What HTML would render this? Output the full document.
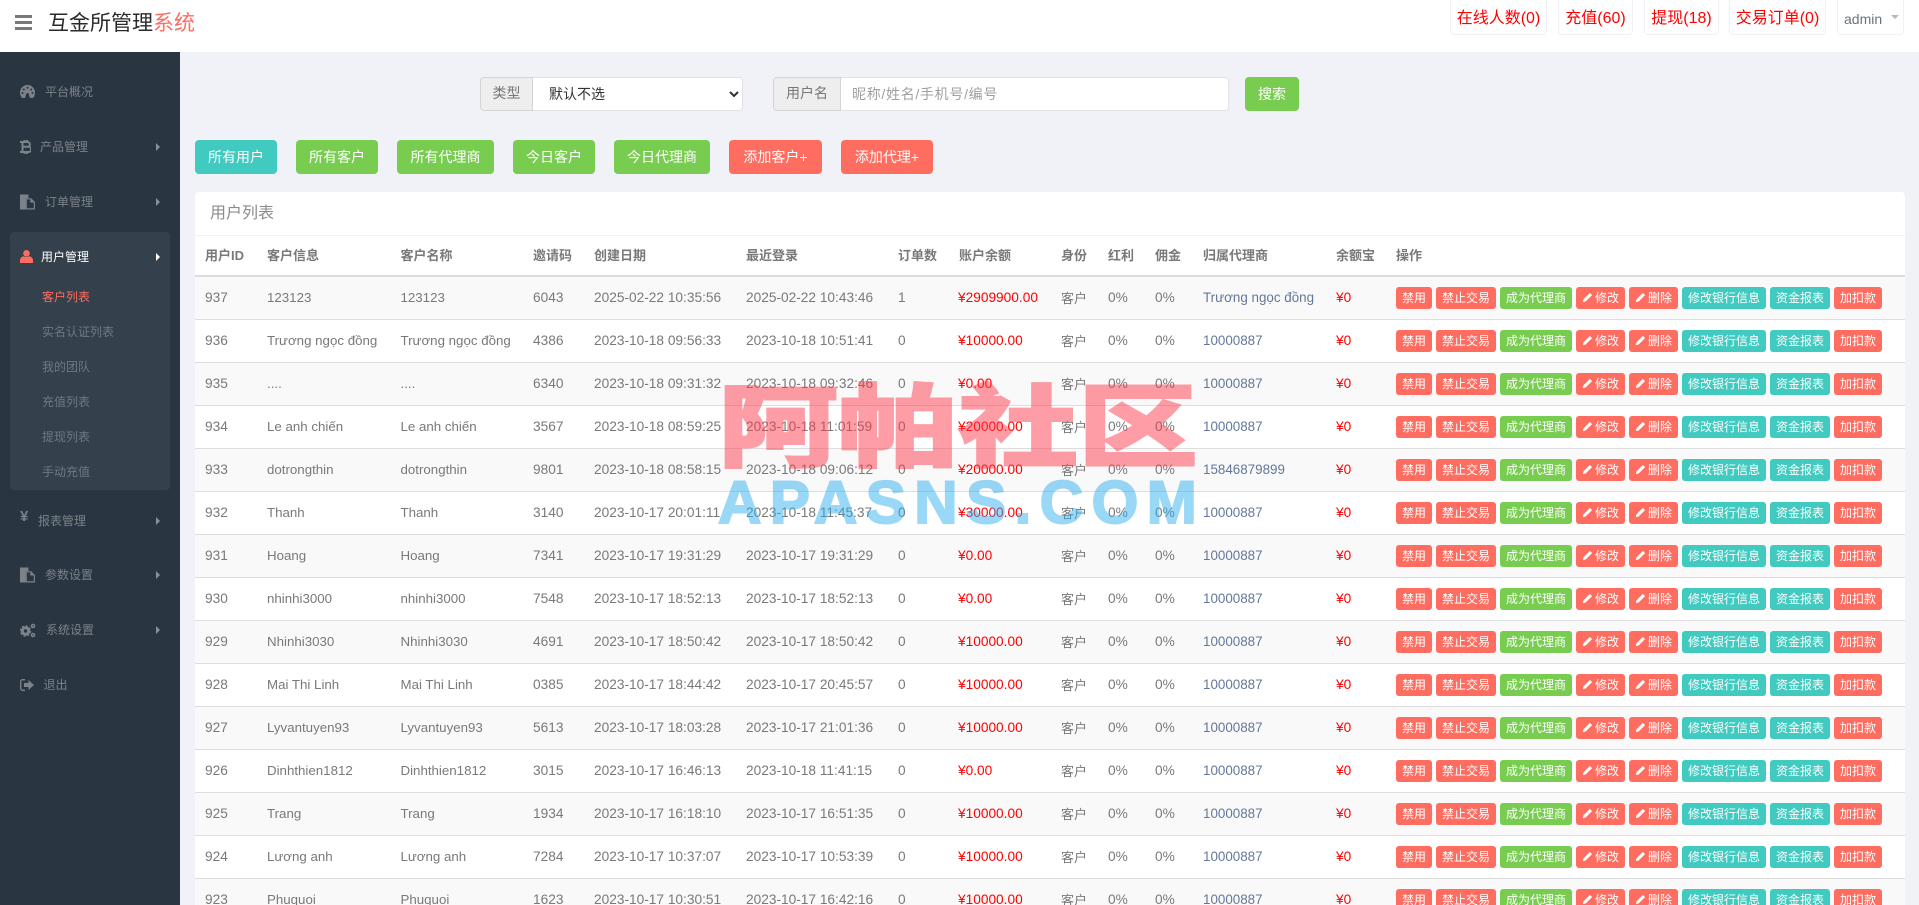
<!DOCTYPE html>
<html lang="zh-CN"><head><meta charset="utf-8"><title>互金所管理系统</title>
<style>
*{box-sizing:border-box}
html,body{margin:0;padding:0;width:1919px;height:905px;overflow:hidden;background:#f1f2f7;font-family:"Liberation Sans","Noto Sans CJK SC",sans-serif;color:#797979;font-size:13px}
.abs,.nb,.si,.sub,.ic,.ar,.tb,.hb{position:absolute}
#head{position:absolute;left:0;top:0;width:1919px;height:52px;background:#fff}
.hb{left:15px;width:17px;height:3px;background:#797979}
#logo{position:absolute;left:48px;top:10px;font-size:21px;line-height:27px;color:#2a2a2a}
#logo span{color:#ff6c60}
.nb{top:-4px;height:39px;border:1px solid #f0f1f6;border-radius:4px;background:#fff;color:#f00;font-size:16px;line-height:44px;text-align:center;white-space:nowrap}
#side{position:absolute;left:0;top:52px;width:180px;height:853px;background:#2a3542}
#subbox{position:absolute;left:10px;top:180px;width:160px;height:258px;background:#35404d;border-radius:4px}
.si{font-size:12px;line-height:16px;color:#7b8288;white-space:nowrap}
.sub{left:42px;font-size:12px;line-height:16px;color:#707880;white-space:nowrap}
.ic{left:20px;display:block}
.ar{left:156px;width:0;height:0;border-left:4px solid #8b9096;border-top:4px solid transparent;border-bottom:4px solid transparent}
.grp{position:absolute;top:77px;height:34px;display:flex}
.add{height:34px;background:#eee;border:1px solid #d4d4d6;border-radius:4px 0 0 4px;color:#777;font-size:14px;line-height:30px;text-align:center}
select,input{height:34px;border:1px solid #e2e2e4;border-left:0;border-radius:0 4px 4px 0;background:#fff;font-size:14px;font-family:inherit;margin:0;outline:0}
select{width:210px;padding-left:12px;color:#333}
input{width:388px;padding-left:11px;color:#333;letter-spacing:.7px}
input::placeholder{color:#a0a0a0;opacity:1}
.tb{top:140px;height:34px;border-radius:4px;color:#fff;font-size:14px;line-height:34px;text-align:center;white-space:nowrap}
.t{background:#41cac0}.g{background:#78cd51}.r{background:#ff6c60}
#panel{position:absolute;left:195px;top:192px;width:1710px;height:713px;overflow:hidden;background:#fff;border-radius:4px 4px 0 0}
#ptitle{position:absolute;left:15px;top:11px;font-size:16px;line-height:22px;color:#8b8b8b}
#pline{position:absolute;left:0;top:43px;width:1710px;height:1px;background:#eff2f7}
table{position:absolute;left:0;top:44px;width:1710px;border-collapse:separate;border-spacing:0;table-layout:fixed}
th{height:41px;border-bottom:2px solid #ddd;padding:0 0 2px 10px;text-align:left;font-size:13px;font-weight:700;color:#797979;white-space:nowrap}
td{height:43px;border-bottom:1px solid #ddd;padding:0 0 2px 10px;font-size:13.7px;color:#797979;white-space:nowrap;overflow:hidden;background:#fff}
tbody tr:nth-child(odd) td{background:#f9f9f9}
td:nth-child(2),td:nth-child(3){font-size:13.3px}
td.c,td.k{font-size:13px}
td.m{color:#f00}
td.m:nth-child(8){padding-left:9px}
td.l{color:#63789a;font-size:13.4px}
td:last-child{padding-bottom:1px}
.ops{display:flex;gap:4px;height:22px}
.ops b{display:block;height:22px;border-radius:3px;color:#fff;font-size:12px;font-weight:400;line-height:22px;text-align:center;white-space:nowrap}
.ops svg{width:11px;height:11px;vertical-align:-1px;margin-right:2px}
.w1{width:36px}.w2{width:60px}.w3{width:72px}.w4{width:49px}.w6{width:84px}.w7{width:48px}
#wm1{position:absolute;left:718px;top:360px;height:120px;font-size:120px;line-height:120px;font-weight:900;color:#ff3546;opacity:.48;white-space:nowrap;transform:scaleY(.75);-webkit-text-stroke:2.5px #ff3546;font-family:"Noto Sans CJK SC",sans-serif}
#wm2{position:absolute;left:718px;top:471px;font-size:60px;line-height:64px;font-weight:700;color:#2baeee;opacity:.48;white-space:nowrap;letter-spacing:8.5px;-webkit-text-stroke:2px #2baeee;font-family:"Liberation Sans",sans-serif}
</style></head><body>
<svg width="0" height="0" style="position:absolute"><symbol id="pen" viewBox="0 0 12 12"><path fill="#fff" d="M8.6 1 11 3.4 4 10.4 .9 11.1 1.6 8Z"/></symbol>
<symbol id="files" viewBox="0 0 16 16"><path fill="#7b8288" d="M0 0h9v4H6v12H0z"/><path fill="none" stroke="#7b8288" stroke-width="1.3" d="M6.6 4.6h5l3.7 3.7v7H6.6z"/><path fill="#7b8288" d="M11 4.5v4h4z"/></symbol></svg>

<div id="head">
<div class="hb" style="top:15px"></div><div class="hb" style="top:21px"></div><div class="hb" style="top:27px"></div>
<div id="logo">互金所管理<span>系统</span></div>
<div class="nb" style="left:1450px;width:97px">在线人数(0)</div>
<div class="nb" style="left:1558px;width:75px">充值(60)</div>
<div class="nb" style="left:1644px;width:75px">提现(18)</div>
<div class="nb" style="left:1729px;width:97px">交易订单(0)</div>
<div class="nb" style="left:1837px;width:67px;color:#6a737b;font-size:14px;text-align:left;padding-left:6px">admin<i style="position:absolute;left:53px;top:18px;width:0;height:0;border-top:4px solid #b6b8c0;border-left:4px solid transparent;border-right:4px solid transparent"></i></div>
</div>

<div id="side">
<div id="subbox"></div>
<svg class="ic" style="top:33px" width="15" height="13" viewBox="0 0 15 13"><path fill="#7b8288" d="M7.5 0A7.5 7.5 0 0 0 0 7.5c0 2 .7 3.9 2 5.5h3l1.500-4.600a1.500 1.500 0 0 1 2 0L10 13h3c1.300-1.600 2-3.500 2-5.500A7.500 7.500 0 0 0 7.500 0Z"/><g fill="#2a3542"><circle cx="7.500" cy="2.800" r="1"/><circle cx="3.800" cy="4.500" r="1"/><circle cx="11.200" cy="4.500" r="1"/><circle cx="2.500" cy="8" r="1"/><circle cx="12.500" cy="8" r="1"/></g></svg>
<div class="si" style="left:45px;top:32px">平台概况</div>
<svg class="ic" style="top:88px" width="11" height="14" viewBox="0 0 11 14"><path fill="none" stroke="#7b8288" stroke-width="2" d="M2.500 2h5a2.400 2.400 0 0 1 0 4.800h-5m0 0h6a2.500 2.500 0 0 1 0 5.200h-6zM2.500 2v10M0 2h3M0 12h3M4.500 0v2M7 0v2M4.500 12v2M7 12v2"/></svg>
<div class="si" style="left:40px;top:87px">产品管理</div><i class="ar" style="top:91px"></i>
<svg class="ic" style="top:142px" width="15" height="16"><use href="#files"/></svg>
<div class="si" style="left:45px;top:142px">订单管理</div><i class="ar" style="top:146px"></i>
<svg class="ic" style="top:198px" width="13" height="13" viewBox="0 0 13 13"><circle cx="6.500" cy="3.300" r="3.300" fill="#ff6c60"/><path fill="#ff6c60" d="M0 13v-2.500C0 8 2 6.500 4 6.300c1.500 1 3.500 1 5 0 2 .2 4 1.700 4 4.200V13z"/></svg>
<div class="si" style="left:41px;top:197px;color:#fff">用户管理</div><i class="ar" style="top:201px;border-left-color:#fff"></i>
<div class="sub" style="top:237px;color:#ff6c60">客户列表</div>
<div class="sub" style="top:272px">实名认证列表</div>
<div class="sub" style="top:307px">我的团队</div>
<div class="sub" style="top:342px">充值列表</div>
<div class="sub" style="top:377px">提现列表</div>
<div class="sub" style="top:412px">手动充值</div>
<div class="si" style="left:20px;top:457px;font-size:15px;font-weight:700">¥</div>
<div class="si" style="left:38px;top:461px">报表管理</div><i class="ar" style="top:465px"></i>
<svg class="ic" style="top:515px" width="15" height="16"><use href="#files"/></svg>
<div class="si" style="left:45px;top:515px">参数设置</div><i class="ar" style="top:519px"></i>
<svg class="ic" style="top:571px" width="16" height="15" viewBox="0 0 16 15"><g fill="none" stroke="#7b8288"><circle cx="5.500" cy="8" r="3.200" stroke-width="3"/><circle cx="5.500" cy="8" r="5" stroke-width="1.400" stroke-dasharray="2 1.930"/><circle cx="13" cy="3" r="1.500" stroke-width="1.600"/><circle cx="13" cy="12" r="1.500" stroke-width="1.600"/></g></svg>
<div class="si" style="left:46px;top:570px">系统设置</div><i class="ar" style="top:574px"></i>
<svg class="ic" style="top:627px" width="14" height="12" viewBox="0 0 14 12"><path fill="none" stroke="#7b8288" stroke-width="1.300" d="M5 .7H2.500A1.800 1.800 0 0 0 .7 2.500v7a1.800 1.800 0 0 0 1.800 1.800H5"/><path fill="#7b8288" d="M4 4h4.500V1L14 6l-5.500 5V8H4z"/></svg>
<div class="si" style="left:43.500px;top:625px">退出</div>
</div>

<div class="grp" style="left:480px"><div class="add" style="width:53px">类型</div><select><option>默认不选</option></select></div>
<div class="grp" style="left:773px"><div class="add" style="width:68px">用户名</div><input placeholder="昵称/姓名/手机号/编号"></div>
<div class="tb g" style="left:1245px;top:77px;width:54px">搜索</div>

<div class="tb t" style="left:195px;width:82px">所有用户</div>
<div class="tb g" style="left:296px;width:82px">所有客户</div>
<div class="tb g" style="left:397px;width:97px">所有代理商</div>
<div class="tb g" style="left:513px;width:82px">今日客户</div>
<div class="tb g" style="left:614px;width:96px">今日代理商</div>
<div class="tb r" style="left:729px;width:93px">添加客户+</div>
<div class="tb r" style="left:841px;width:92px">添加代理+</div>

<div id="panel">
<div id="ptitle">用户列表</div><div id="pline"></div>
<table>
<colgroup><col style="width:62px"><col style="width:133.500px"><col style="width:132.500px"><col style="width:61px"><col style="width:152px"><col style="width:152px"><col style="width:61px"><col style="width:102px"><col style="width:47px"><col style="width:47px"><col style="width:48px"><col style="width:133px"><col style="width:60px"><col style="width:519px"></colgroup>
<thead><tr><th>用户ID</th><th>客户信息</th><th>客户名称</th><th>邀请码</th><th>创建日期</th><th>最近登录</th><th>订单数</th><th>账户余额</th><th>身份</th><th>红利</th><th>佣金</th><th>归属代理商</th><th>余额宝</th><th>操作</th></tr></thead>
<tbody>
<tr><td>937</td><td>123123</td><td>123123</td><td>6043</td><td>2025-02-22 10:35:56</td><td>2025-02-22 10:43:46</td><td>1</td><td class="m">¥2909900.00</td><td class="k">客户</td><td>0%</td><td>0%</td><td class="l">Trương ngọc đồng</td><td class="m">¥0</td><td><div class="ops"><b class="r w1">禁用</b><b class="r w2">禁止交易</b><b class="g w3">成为代理商</b><b class="r w4"><svg><use href="#pen"/></svg>修改</b><b class="r w4"><svg><use href="#pen"/></svg>删除</b><b class="t w6">修改银行信息</b><b class="t w2">资金报表</b><b class="r w7">加扣款</b></div></td></tr>
<tr><td>936</td><td>Trương ngọc đồng</td><td>Trương ngọc đồng</td><td>4386</td><td>2023-10-18 09:56:33</td><td>2023-10-18 10:51:41</td><td>0</td><td class="m">¥10000.00</td><td class="k">客户</td><td>0%</td><td>0%</td><td class="l">10000887</td><td class="m">¥0</td><td><div class="ops"><b class="r w1">禁用</b><b class="r w2">禁止交易</b><b class="g w3">成为代理商</b><b class="r w4"><svg><use href="#pen"/></svg>修改</b><b class="r w4"><svg><use href="#pen"/></svg>删除</b><b class="t w6">修改银行信息</b><b class="t w2">资金报表</b><b class="r w7">加扣款</b></div></td></tr>
<tr><td>935</td><td>....</td><td>....</td><td>6340</td><td>2023-10-18 09:31:32</td><td>2023-10-18 09:32:46</td><td>0</td><td class="m">¥0.00</td><td class="k">客户</td><td>0%</td><td>0%</td><td class="l">10000887</td><td class="m">¥0</td><td><div class="ops"><b class="r w1">禁用</b><b class="r w2">禁止交易</b><b class="g w3">成为代理商</b><b class="r w4"><svg><use href="#pen"/></svg>修改</b><b class="r w4"><svg><use href="#pen"/></svg>删除</b><b class="t w6">修改银行信息</b><b class="t w2">资金报表</b><b class="r w7">加扣款</b></div></td></tr>
<tr><td>934</td><td>Le anh chiến</td><td>Le anh chiến</td><td>3567</td><td>2023-10-18 08:59:25</td><td>2023-10-18 11:01:59</td><td>0</td><td class="m">¥20000.00</td><td class="k">客户</td><td>0%</td><td>0%</td><td class="l">10000887</td><td class="m">¥0</td><td><div class="ops"><b class="r w1">禁用</b><b class="r w2">禁止交易</b><b class="g w3">成为代理商</b><b class="r w4"><svg><use href="#pen"/></svg>修改</b><b class="r w4"><svg><use href="#pen"/></svg>删除</b><b class="t w6">修改银行信息</b><b class="t w2">资金报表</b><b class="r w7">加扣款</b></div></td></tr>
<tr><td>933</td><td>dotrongthin</td><td>dotrongthin</td><td>9801</td><td>2023-10-18 08:58:15</td><td>2023-10-18 09:06:12</td><td>0</td><td class="m">¥20000.00</td><td class="k">客户</td><td>0%</td><td>0%</td><td class="l">15846879899</td><td class="m">¥0</td><td><div class="ops"><b class="r w1">禁用</b><b class="r w2">禁止交易</b><b class="g w3">成为代理商</b><b class="r w4"><svg><use href="#pen"/></svg>修改</b><b class="r w4"><svg><use href="#pen"/></svg>删除</b><b class="t w6">修改银行信息</b><b class="t w2">资金报表</b><b class="r w7">加扣款</b></div></td></tr>
<tr><td>932</td><td>Thanh</td><td>Thanh</td><td>3140</td><td>2023-10-17 20:01:11</td><td>2023-10-18 11:45:37</td><td>0</td><td class="m">¥30000.00</td><td class="k">客户</td><td>0%</td><td>0%</td><td class="l">10000887</td><td class="m">¥0</td><td><div class="ops"><b class="r w1">禁用</b><b class="r w2">禁止交易</b><b class="g w3">成为代理商</b><b class="r w4"><svg><use href="#pen"/></svg>修改</b><b class="r w4"><svg><use href="#pen"/></svg>删除</b><b class="t w6">修改银行信息</b><b class="t w2">资金报表</b><b class="r w7">加扣款</b></div></td></tr>
<tr><td>931</td><td>Hoang</td><td>Hoang</td><td>7341</td><td>2023-10-17 19:31:29</td><td>2023-10-17 19:31:29</td><td>0</td><td class="m">¥0.00</td><td class="k">客户</td><td>0%</td><td>0%</td><td class="l">10000887</td><td class="m">¥0</td><td><div class="ops"><b class="r w1">禁用</b><b class="r w2">禁止交易</b><b class="g w3">成为代理商</b><b class="r w4"><svg><use href="#pen"/></svg>修改</b><b class="r w4"><svg><use href="#pen"/></svg>删除</b><b class="t w6">修改银行信息</b><b class="t w2">资金报表</b><b class="r w7">加扣款</b></div></td></tr>
<tr><td>930</td><td>nhinhi3000</td><td>nhinhi3000</td><td>7548</td><td>2023-10-17 18:52:13</td><td>2023-10-17 18:52:13</td><td>0</td><td class="m">¥0.00</td><td class="k">客户</td><td>0%</td><td>0%</td><td class="l">10000887</td><td class="m">¥0</td><td><div class="ops"><b class="r w1">禁用</b><b class="r w2">禁止交易</b><b class="g w3">成为代理商</b><b class="r w4"><svg><use href="#pen"/></svg>修改</b><b class="r w4"><svg><use href="#pen"/></svg>删除</b><b class="t w6">修改银行信息</b><b class="t w2">资金报表</b><b class="r w7">加扣款</b></div></td></tr>
<tr><td>929</td><td>Nhinhi3030</td><td>Nhinhi3030</td><td>4691</td><td>2023-10-17 18:50:42</td><td>2023-10-17 18:50:42</td><td>0</td><td class="m">¥10000.00</td><td class="k">客户</td><td>0%</td><td>0%</td><td class="l">10000887</td><td class="m">¥0</td><td><div class="ops"><b class="r w1">禁用</b><b class="r w2">禁止交易</b><b class="g w3">成为代理商</b><b class="r w4"><svg><use href="#pen"/></svg>修改</b><b class="r w4"><svg><use href="#pen"/></svg>删除</b><b class="t w6">修改银行信息</b><b class="t w2">资金报表</b><b class="r w7">加扣款</b></div></td></tr>
<tr><td>928</td><td>Mai Thi Linh</td><td>Mai Thi Linh</td><td>0385</td><td>2023-10-17 18:44:42</td><td>2023-10-17 20:45:57</td><td>0</td><td class="m">¥10000.00</td><td class="k">客户</td><td>0%</td><td>0%</td><td class="l">10000887</td><td class="m">¥0</td><td><div class="ops"><b class="r w1">禁用</b><b class="r w2">禁止交易</b><b class="g w3">成为代理商</b><b class="r w4"><svg><use href="#pen"/></svg>修改</b><b class="r w4"><svg><use href="#pen"/></svg>删除</b><b class="t w6">修改银行信息</b><b class="t w2">资金报表</b><b class="r w7">加扣款</b></div></td></tr>
<tr><td>927</td><td>Lyvantuyen93</td><td>Lyvantuyen93</td><td>5613</td><td>2023-10-17 18:03:28</td><td>2023-10-17 21:01:36</td><td>0</td><td class="m">¥10000.00</td><td class="k">客户</td><td>0%</td><td>0%</td><td class="l">10000887</td><td class="m">¥0</td><td><div class="ops"><b class="r w1">禁用</b><b class="r w2">禁止交易</b><b class="g w3">成为代理商</b><b class="r w4"><svg><use href="#pen"/></svg>修改</b><b class="r w4"><svg><use href="#pen"/></svg>删除</b><b class="t w6">修改银行信息</b><b class="t w2">资金报表</b><b class="r w7">加扣款</b></div></td></tr>
<tr><td>926</td><td>Dinhthien1812</td><td>Dinhthien1812</td><td>3015</td><td>2023-10-17 16:46:13</td><td>2023-10-18 11:41:15</td><td>0</td><td class="m">¥0.00</td><td class="k">客户</td><td>0%</td><td>0%</td><td class="l">10000887</td><td class="m">¥0</td><td><div class="ops"><b class="r w1">禁用</b><b class="r w2">禁止交易</b><b class="g w3">成为代理商</b><b class="r w4"><svg><use href="#pen"/></svg>修改</b><b class="r w4"><svg><use href="#pen"/></svg>删除</b><b class="t w6">修改银行信息</b><b class="t w2">资金报表</b><b class="r w7">加扣款</b></div></td></tr>
<tr><td>925</td><td>Trang</td><td>Trang</td><td>1934</td><td>2023-10-17 16:18:10</td><td>2023-10-17 16:51:35</td><td>0</td><td class="m">¥10000.00</td><td class="k">客户</td><td>0%</td><td>0%</td><td class="l">10000887</td><td class="m">¥0</td><td><div class="ops"><b class="r w1">禁用</b><b class="r w2">禁止交易</b><b class="g w3">成为代理商</b><b class="r w4"><svg><use href="#pen"/></svg>修改</b><b class="r w4"><svg><use href="#pen"/></svg>删除</b><b class="t w6">修改银行信息</b><b class="t w2">资金报表</b><b class="r w7">加扣款</b></div></td></tr>
<tr><td>924</td><td>Lương anh</td><td>Lương anh</td><td>7284</td><td>2023-10-17 10:37:07</td><td>2023-10-17 10:53:39</td><td>0</td><td class="m">¥10000.00</td><td class="k">客户</td><td>0%</td><td>0%</td><td class="l">10000887</td><td class="m">¥0</td><td><div class="ops"><b class="r w1">禁用</b><b class="r w2">禁止交易</b><b class="g w3">成为代理商</b><b class="r w4"><svg><use href="#pen"/></svg>修改</b><b class="r w4"><svg><use href="#pen"/></svg>删除</b><b class="t w6">修改银行信息</b><b class="t w2">资金报表</b><b class="r w7">加扣款</b></div></td></tr>
<tr><td>923</td><td>Phuquoi</td><td>Phuquoi</td><td>1623</td><td>2023-10-17 10:30:51</td><td>2023-10-17 16:42:16</td><td>0</td><td class="m">¥10000.00</td><td class="k">客户</td><td>0%</td><td>0%</td><td class="l">10000887</td><td class="m">¥0</td><td><div class="ops"><b class="r w1">禁用</b><b class="r w2">禁止交易</b><b class="g w3">成为代理商</b><b class="r w4"><svg><use href="#pen"/></svg>修改</b><b class="r w4"><svg><use href="#pen"/></svg>删除</b><b class="t w6">修改银行信息</b><b class="t w2">资金报表</b><b class="r w7">加扣款</b></div></td></tr>
</tbody></table>
</div>

<div id="wm1">阿帕社区</div>
<div id="wm2">APASNS.COM</div>
</body></html>
